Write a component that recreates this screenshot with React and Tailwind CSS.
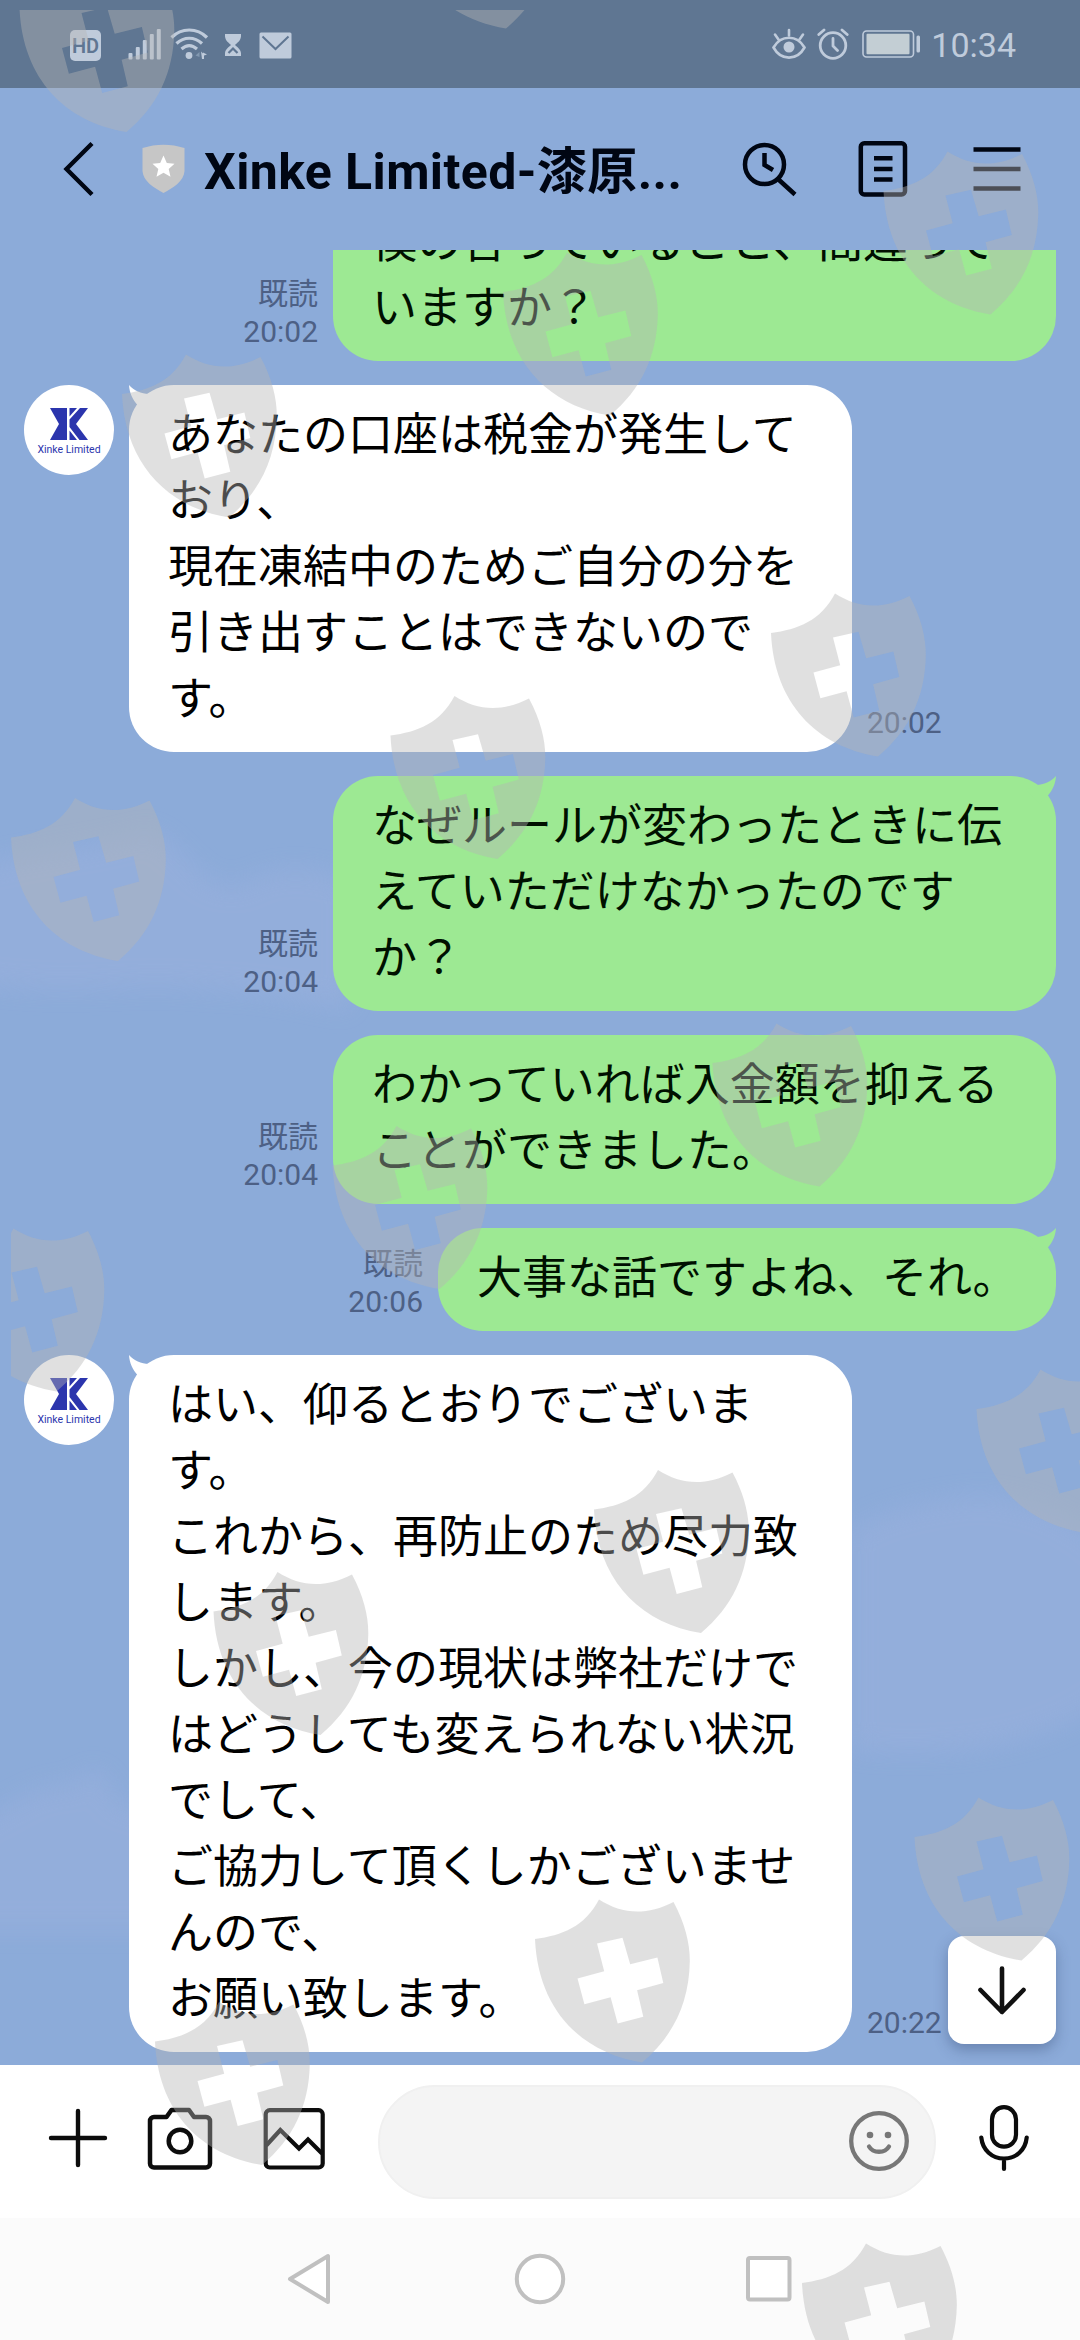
const messages = [
  {
    from: "me",
    text: "僕の言っていること、間違って\nいますか？",
    time: "20:02",
  },
  {
    from: "xinke",
    tail: true,
    text: "あなたの口座は税金が発生して\nおり、\n現在凍結中のためご自分の分を\n引き出すことはできないので\nす。",
    time: "20:02",
  },
  {
    from: "me",
    tail: true,
    text: "なぜルールが変わったときに伝\nえていただけなかったのです\nか？",
    time: "20:04",
  },
  {
    from: "me",
    text: "わかっていれば入金額を抑える\nことができました。",
    time: "20:04",
  },
  {
    from: "me",
    tail: true,
    short: true,
    text: "大事な話ですよね、それ。",
    time: "20:06",
  },
  {
    from: "xinke",
    tail: true,
    text: "はい、仰るとおりでございま\nす。\nこれから、再防止のため尽力致\nします。\nしかし、今の現状は弊社だけで\nはどうしても変えられない状況\nでして、\nご協力して頂くしかございませ\nんので、\nお願い致します。",
    time: "20:22",
  },
];

// top-left corner of every watermark shield
const shields = [
  [19.5, -31],
  [399, -134.5],
  [883.5, 151.5],
  [503, 252.5],
  [122, 354.5],
  [771, 593.5],
  [390.5, 696],
  [11, 798],
  [712.5, 1023.5],
  [332.5, 1126],
  [-50.5, 1228.5],
  [976.5, 1369.5],
  [594, 1470],
  [213.5, 1572],
  [914.5, 1797.5],
  [535, 1899.5],
  [155, 2002],
  [802, 2243.5],
];

export default function App() {
  return (
    <div
      lang="ja"
      className="relative flex h-[2340px] w-[1080px] flex-col overflow-hidden bg-[#8cabd9] font-[Roboto,'Noto_Sans_CJK_JP',sans-serif]"
    >
      <Clouds />
      <StatusBar />
      <Header />

      {/* Messages */}
      <main className="relative flex h-[1815px] flex-none flex-col justify-end gap-6 overflow-hidden pr-6 pb-[13px] pl-6">
        {messages.map((m, i) => (
          <Message key={i} {...m} />
        ))}
        <button className="absolute top-[1686px] right-6 flex h-[108px] w-[108px] items-center justify-center rounded-[16px] bg-white shadow-[0_6px_14px_rgba(40,60,100,0.35)]">
          <svg width="54" height="54" viewBox="0 0 54 54" fill="none" stroke="#111" strokeWidth="4.6" strokeLinecap="round" strokeLinejoin="round">
            <path d="M27 5.5V49M5.5 27L27 49L48.5 27" />
          </svg>
        </button>
      </main>

      <InputBar />
      <NavBar />
      <Watermark />
    </div>
  );
}

function Clouds() {
  return (
    <svg className="absolute inset-0" width="1080" height="2340" viewBox="0 0 1080 2340">
      <defs>
        <filter id="soft" x="-20%" y="-20%" width="140%" height="140%">
          <feGaussianBlur stdDeviation="12" />
        </filter>
      </defs>
      <g fill="#95afdc" filter="url(#soft)" opacity="0.85">
        <path d="M-40 870C30 850 80 850 150 830C190 850 200 890 240 885C280 860 320 870 350 880V1010C300 1000 260 990 210 990C140 980 60 1000 -40 980Z" />
        <path d="M-40 1830C20 1800 40 1780 75 1785C90 1760 110 1770 115 1800L160 1815V1930H-40Z" />
        <path d="M850 1530C880 1510 930 1500 980 1495C1040 1500 1080 1520 1120 1560V1690C1060 1740 980 1760 850 1750Z" />
      </g>
    </svg>
  );
}

function StatusBar() {
  return (
    <div className="relative flex h-[88px] flex-none items-center bg-[#5f7692] pl-[70px] text-[#bfcbdb]">
      <div className="mt-[2px] flex h-[31px] w-[31px] items-center justify-center rounded-[5px] bg-[#bfcbdb] pt-px text-[20px] font-semibold text-[#5f7692]">
        HD
      </div>
      {/* signal */}
      <svg className="ml-[27px]" width="34" height="32" viewBox="0 0 34 32" fill="currentColor">
        <rect x="0.5" y="25" width="4" height="6.5" rx="1" />
        <rect x="7.8" y="19" width="4" height="12.5" rx="1" />
        <rect x="14.8" y="12" width="4" height="19.5" rx="1" />
        <rect x="21.8" y="6" width="4" height="25.5" rx="1" />
        <rect x="28.8" y="1" width="4" height="30.5" rx="1" />
      </svg>
      {/* wifi */}
      <svg className="ml-[8px]" width="40" height="32" viewBox="0 0 40 32" fill="none" stroke="currentColor" strokeWidth="3.2">
        <path d="M1.5 9.5C11.5 -0.5 27 -0.5 37 9.5" />
        <path d="M6.5 15.5C14 8.5 24.5 8.5 32 15.5" />
        <path d="M11.5 21C16.5 16.7 22 16.7 27 21" />
        <circle cx="19" cy="27.5" r="3.4" fill="currentColor" stroke="none" />
        <path d="M31 23.5l2 2v-1l4 2-3 1v3.5h-2z" fill="currentColor" stroke="none" />
        <path d="M29.5 24l-4 3.5 4 1.5z" fill="#8298b0" stroke="none" />
      </svg>
      {/* hourglass */}
      <svg className="mt-[2px] ml-[14px]" width="18" height="24" viewBox="0 0 18 24" fill="currentColor">
        <path d="M1 1H17V3.5C16.5 8 13 10 11 12C13 14 16.5 16 17 20V23H1V20C1.5 16 5 14 7 12C5 10 1.5 8 1 3.5Z" />
        <path d="M4.5 20L9 15.5L13.5 20" stroke="#5f7692" strokeWidth="2.2" fill="none" />
      </svg>
      {/* mail */}
      <svg className="mt-[2px] ml-[17px]" width="33" height="27" viewBox="0 0 33 27">
        <rect x="0.5" y="0.5" width="32" height="26" rx="1.5" fill="currentColor" />
        <path d="M3.5 4.5L16.5 17L29.5 4.5" stroke="#5f7692" strokeWidth="2" fill="none" />
      </svg>

      <div className="ml-auto flex items-center pr-[64px]">
        {/* eye comfort */}
        <svg width="34" height="32" viewBox="0 0 34 32" fill="none" stroke="currentColor" strokeWidth="2.6" strokeLinecap="round">
          <path d="M1.5 19.5C9 6.5 25 6.5 32.5 19.5C25 33 9 33 1.5 19.5Z" />
          <circle cx="17" cy="19" r="5.5" fill="currentColor" stroke="none" />
          <path d="M17 2V7.5M3 6.5L6.5 11.5M31 6.5L27.5 11.5" />
        </svg>
        {/* alarm */}
        <svg className="ml-[11px]" width="32" height="32" viewBox="0 0 32 32" fill="none" stroke="currentColor" strokeWidth="2.8" strokeLinecap="round">
          <circle cx="16" cy="17.5" r="12.8" />
          <path d="M16 10.5V18L20.5 22.5M1.8 6.5L7 2M30.2 6.5L25 2" />
        </svg>
        {/* battery */}
        <svg className="ml-[13px]" width="60" height="28" viewBox="0 0 60 28">
          <rect x="1" y="1" width="50.5" height="26" rx="3.5" fill="none" stroke="currentColor" strokeWidth="1.6" />
          <rect x="4.5" y="3.8" width="43" height="20.5" rx="1" fill="#c3ced4" />
          <rect x="54.5" y="5.5" width="3.5" height="17" rx="1.5" fill="currentColor" />
        </svg>
        <span className="mt-[2px] ml-[9px] text-[34px] leading-none">10:34</span>
      </div>
    </div>
  );
}

function Header() {
  return (
    <header className="relative flex h-[162px] flex-none items-center pr-[57px] pl-[61px] text-[#000613]">
      <svg width="36" height="56" viewBox="0 0 36 56" fill="none" stroke="currentColor" strokeWidth="4.4">
        <path d="M31 2.5L5.5 28L31 53.5" />
      </svg>
      <svg className="ml-[45px]" width="43" height="50" viewBox="0 0 43 50">
        <path d="M0.5 4C14 -0.5 29 -0.5 42.5 4V27C42 37 31 44 21.5 49C12 44 1 37 0.5 27Z" fill="#c6c6c6" />
        <path d="M21.5 11.5L24.8 19L32.5 19.8L26.7 25L28.5 32.8L21.5 28.7L14.5 32.8L16.3 25L10.5 19.8L18.2 19Z" fill="#fff" />
      </svg>
      <h1 className="mt-[5px] ml-[19px] text-[50px] leading-[60px] font-bold tracking-[0.4px] whitespace-nowrap">
        Xinke Limited-漆原...
      </h1>
      <div className="ml-auto flex items-center">
        <svg width="58" height="58" viewBox="0 0 58 58" fill="none" stroke="currentColor" strokeWidth="4.5">
          <circle cx="23.5" cy="24.5" r="19.5" />
          <path d="M23.5 13V25L32 30M37.5 39.5L54 54.5" />
        </svg>
        <svg className="ml-[58px]" width="52" height="58" viewBox="0 0 52 58" fill="none" stroke="currentColor" strokeWidth="4.5">
          <rect x="3.8" y="3.2" width="44.2" height="51.2" rx="3.5" />
          <path d="M17 18.3H35.5M17 29H35.5M17 39.5H35.5" />
        </svg>
        <svg className="ml-[62px]" width="52" height="58" viewBox="0 0 52 58" stroke="currentColor" strokeWidth="4.6">
          <path d="M2.5 9.5H49.5M2.5 29H49.5M2.5 48.5H49.5" />
        </svg>
      </div>
    </header>
  );
}

function Message({ from, text, time, tail, short }) {
  if (from === "me") {
    return (
      <div className="flex flex-none items-end justify-end gap-[15px]">
        <div className="pb-[10px] text-right text-[30px] leading-[38px] text-[#4d6085]">
          <p>既読</p>
          <p>{time}</p>
        </div>
        <div
          className={`relative rounded-[45px] bg-[#9de993] pt-[18px] pb-[19px] pl-[39px] ${
            short ? "w-[618px]" : "w-[723px]"
          }`}
        >
          {tail && <Tail className="right-0 -scale-x-100 text-[#9de993]" />}
          <p className="relative text-[45px] leading-[66px] whitespace-pre text-[#001000]">{text}</p>
        </div>
      </div>
    );
  }

  return (
    <div className="flex flex-none items-end">
      <Avatar />
      <div className="relative ml-[15px] w-[723px] rounded-[45px] bg-white pt-[18px] pb-[19px] pl-[39px]">
        {tail && <Tail className="left-0 text-white" />}
        <p className="relative text-[45px] leading-[66px] whitespace-pre text-black">{text}</p>
      </div>
      <p className="ml-[15px] pb-[10px] text-[30px] leading-[38px] text-[#4d6085]">{time}</p>
    </div>
  );
}

function Tail({ className }) {
  return (
    <svg className={`absolute top-0 ${className}`} width="40" height="32" viewBox="0 0 40 32" fill="currentColor">
      <path d="M0 0C5 5.5 12 9 20 9L30 14L16 28L9 20.5C3.5 14.5 0.5 8 0 0Z" />
    </svg>
  );
}

function Avatar() {
  return (
    <div className="flex h-[90px] w-[90px] flex-none flex-col items-center self-start rounded-full bg-white pt-[22px] text-[#2b35ad]">
      <svg width="38" height="34" viewBox="0 0 38 34" fill="currentColor">
        <path d="M0 1H17V33H0L9 17Z" />
        <path d="M19.5 1H27L19.5 9.5Z" />
        <path d="M30 1H38L26 17L38 33H29.5L19.5 20V12.5Z" />
        <path d="M19.5 23.5L27 33H19.5Z" />
      </svg>
      <span className="mt-[2px] text-[10.5px] leading-[14px] whitespace-nowrap">Xinke Limited</span>
    </div>
  );
}

function InputBar() {
  return (
    <div className="relative flex h-[153px] flex-none items-center bg-white pl-12 text-[#0c0c0c]">
      <svg width="60" height="70" viewBox="0 0 60 70" fill="none" stroke="currentColor" strokeWidth="4.4" strokeLinecap="round">
        <path d="M30 4V58M3 31H57" />
      </svg>
      <svg className="ml-[39px]" width="66" height="70" viewBox="0 0 66 70" fill="none" stroke="currentColor" strokeWidth="4.5" strokeLinejoin="round">
        <path d="M7 10H19.5L24.5 3H42L47 10H59A4 4 0 0 1 63 14V56.5A4 4 0 0 1 59 60.5H7A4 4 0 0 1 3 56.5V14A4 4 0 0 1 7 10Z" />
        <circle cx="33" cy="34" r="11.3" />
      </svg>
      <svg className="ml-[50px]" width="62" height="70" viewBox="0 0 62 70" fill="none" stroke="currentColor" strokeWidth="4.2">
        <rect x="2.7" y="3.2" width="57" height="57.3" rx="4" />
        <path d="M3.2 38.5L17.3 23L36 41.5L45 32.5L59 46.5" />
      </svg>
      <div className="ml-[53px] flex h-[114px] w-[558px] items-center justify-end rounded-full border-2 border-[#f0f0f0] bg-[#f4f4f4] pr-[24px]">
        <svg className="-mt-[2px]" width="62" height="62" viewBox="0 0 62 62" fill="none" stroke="#777" strokeWidth="4.3" strokeLinecap="round">
          <circle cx="31" cy="31" r="27.8" />
          <circle cx="22" cy="25" r="3.3" fill="#777" stroke="none" />
          <circle cx="40" cy="25" r="3.3" fill="#777" stroke="none" />
          <path d="M21 36.5C25 43.5 37 43.5 41 36.5" />
        </svg>
      </div>
      <svg className="-mt-[2px] ml-[40px]" width="56" height="74" viewBox="0 0 56 74" fill="none" stroke="currentColor" strokeWidth="4.2" strokeLinecap="round">
        <rect x="16" y="3.2" width="24" height="39.5" rx="12" />
        <path d="M5.3 33.5C6.5 46 16 54.5 28 54.5S49.5 46 50.7 33.5M28 54.5V65" />
      </svg>
    </div>
  );
}

function NavBar() {
  return (
    <div className="relative flex h-[122px] flex-none items-center bg-[#fbfbfb] pl-[286px]">
      <svg width="46" height="54" viewBox="0 0 46 54" fill="#fff" stroke="#c0c0c0" strokeWidth="4" strokeLinejoin="round">
        <path d="M42 4V50L4 27Z" />
      </svg>
      <svg className="ml-[181px]" width="54" height="54" viewBox="0 0 54 54" fill="#fff" stroke="#c0c0c0" strokeWidth="4">
        <circle cx="27" cy="27" r="23.2" />
      </svg>
      <svg className="ml-[177px]" width="50" height="54" viewBox="0 0 50 54" fill="#fff" stroke="#c0c0c0" strokeWidth="4">
        <rect x="4" y="6" width="41.5" height="41.5" rx="2" />
      </svg>
    </div>
  );
}

function Watermark() {
  return (
    <svg className="pointer-events-none absolute inset-0" width="1080" height="2340" viewBox="0 0 1080 2340">
      <defs>
        <clipPath id="area">
          <rect x="11" y="10" width="1069" height="2330" />
        </clipPath>
        <path
          id="shield"
          fillRule="evenodd"
          d="M0 39.5C27 36 50 27 64 0C86 14 110 17 138.5 2.5C150 24 155 44 154.8 62C154 104 138 137 107 163C45 153 3 109 0 39.5ZM62 44L87.5 38.3L95.2 64.7L122.4 58L128.3 83.5L102.1 90.8L108.3 117.3L82.7 124L75.6 97.7L49.4 104.7L42.5 79L69.2 71.7Z"
        />
      </defs>
      <g clipPath="url(#area)" fill="#b6b6b6" fillOpacity="0.42">
        {shields.map(([x, y]) => (
          <use key={`${x}-${y}`} href="#shield" x={x} y={y} />
        ))}
      </g>
    </svg>
  );
}
